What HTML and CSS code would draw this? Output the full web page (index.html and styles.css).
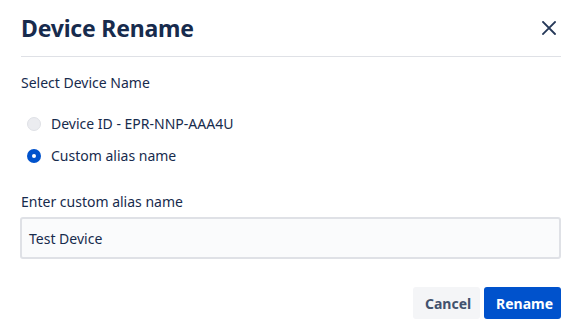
FILE: index.html
```html
<!DOCTYPE html>
<html>
<head>
<meta charset="utf-8">
<link rel="stylesheet" href="styles.css">
</head>
<body>
<div class="dialog">
  <div class="header">
    <h1 class="title">Device Rename</h1>
    <button class="close" aria-label="Close">
      <svg width="14" height="14" viewBox="0 0 14 14"><path d="M1 1L13 13M13 1L1 13" stroke="#253858" stroke-width="1.8" stroke-linecap="square"/></svg>
    </button>
  </div>
  <div class="body">
    <div class="label">Select Device Name</div>
    <div class="radios">
      <label class="radio"><span class="dot off"></span><span>Device ID - EPR-NNP-AAA4U</span></label>
      <label class="radio"><span class="dot on"></span><span>Custom alias name</span></label>
    </div>
    <div class="label field-label">Enter custom alias name</div>
    <div class="input">Test Device</div>
  </div>
  <div class="footer">
    <button class="btn cancel">Cancel</button>
    <button class="btn primary">Rename</button>
  </div>
</div>
</body>
</html>
```
FILE: styles.css
```css
* { box-sizing: border-box; }
body {
  margin: 0;
  background: #fff;
  font-family: "Noto Sans", "Liberation Sans", sans-serif;
  color: #172B4D;
}
.dialog {
  width: 587px;
  padding: 0 26px 0 21px;
}
.header {
  display: flex;
  align-items: center;
  justify-content: space-between;
  height: 57px;
  border-bottom: 1px solid #DFE1E6;
}
.title {
  margin: 0;
  font-size: 23px;
  font-weight: 700;
  color: #172B4D;
  letter-spacing: -0.2px;
}
.close {
  border: 0;
  background: none;
  padding: 0;
  margin-right: 5px;
  width: 14px;
  height: 14px;
  display: flex;
}
.body {
  padding-top: 16px;
}
.label {
  font-size: 14px;
  line-height: 20px;
  color: #172B4D;
}
.radios {
  display: flex;
  flex-direction: column;
  gap: 12px;
  padding: 21px 0 0 6px;
}
.radio {
  display: flex;
  align-items: center;
  gap: 10px;
  font-size: 14px;
  line-height: 20px;
}
.dot {
  width: 14px;
  height: 14px;
  border-radius: 50%;
  display: inline-block;
  position: relative;
}
.dot.off {
  background: #EBECF0;
  border: 1px solid #DFE1E6;
}
.dot.on {
  background: #0052CC;
}
.dot.on::after {
  content: "";
  position: absolute;
  left: 5px;
  top: 5px;
  width: 4px;
  height: 4px;
  border-radius: 50%;
  background: #fff;
}
.field-label {
  margin-top: 26px;
}
.input {
  margin-top: 5px;
  margin-left: -1px;
  height: 42px;
  border: 2px solid #DFE1E6;
  border-radius: 3px;
  background: #FAFBFC;
  padding: 0 7px;
  display: flex;
  align-items: center;
  font-size: 14px;
  color: #172B4D;
}
.footer {
  display: flex;
  justify-content: flex-end;
  gap: 4px;
  margin-top: 28px;
}
.btn {
  border: 0;
  border-radius: 3px;
  height: 32px;
  font-family: inherit;
  font-size: 14px;
  font-weight: 700;
  padding: 0 12px;
}
.cancel {
  background: #F4F5F7;
  color: #42526E;
  width: 67px;
}
.primary {
  background: #0052CC;
  color: #fff;
  width: 77px;
}
```
